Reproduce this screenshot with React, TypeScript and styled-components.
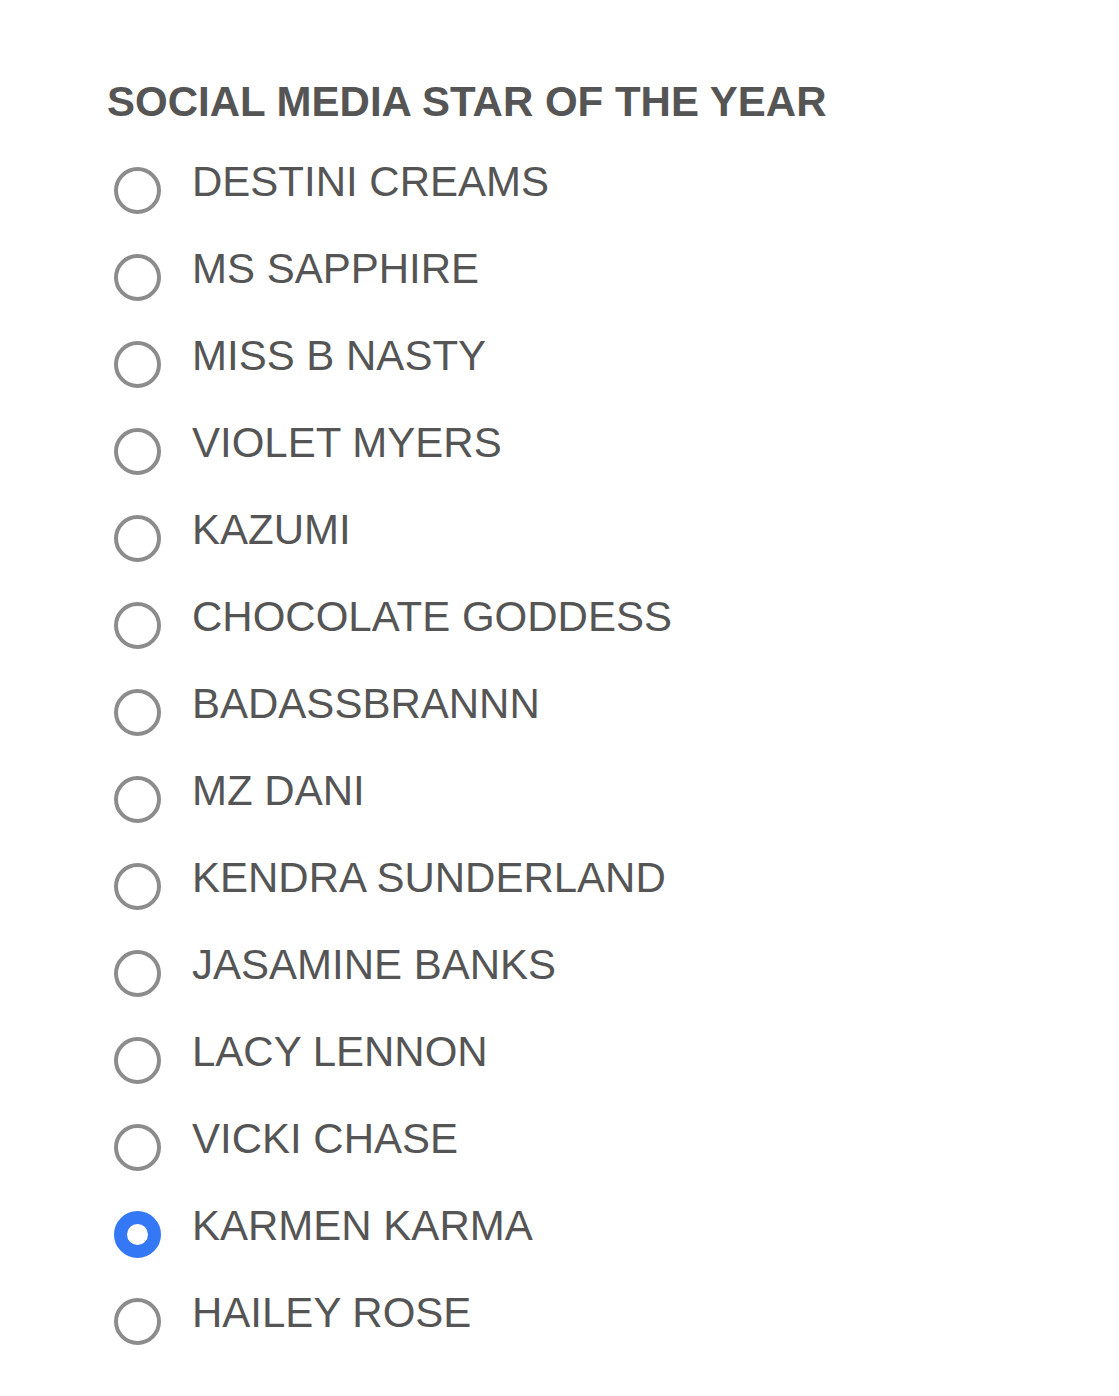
import { useState } from "react";
import styled, { createGlobalStyle } from "styled-components";

const nominees = [
    "DESTINI CREAMS",
    "MS SAPPHIRE",
    "MISS B NASTY",
    "VIOLET MYERS",
    "KAZUMI",
    "CHOCOLATE GODDESS",
    "BADASSBRANNN",
    "MZ DANI",
    "KENDRA SUNDERLAND",
    "JASAMINE BANKS",
    "LACY LENNON",
    "VICKI CHASE",
    "KARMEN KARMA",
    "HAILEY ROSE",
];

export default function App() {
    const [picked, setPicked] = useState("KARMEN KARMA");

    return (
        <>
            <GlobalStyle />
            <Page>
                <Title>SOCIAL MEDIA STAR OF THE YEAR</Title>
                <OptionList>
                    {nominees.map(name => (
                        <Option key={name}>
                            <Radio
                                type="radio"
                                name="social-media-star"
                                value={name}
                                checked={picked === name}
                                onChange={() => setPicked(name)}
                            />
                            <OptionText>{name}</OptionText>
                        </Option>
                    ))}
                </OptionList>
            </Page>
        </>
    )
}

const GlobalStyle = createGlobalStyle`
body {
    margin: 0;
    background: #fff;
    font-family: "Liberation Sans", Arial, sans-serif;
}
`

const Page = styled.main`
display: flex;
flex-direction: column;
padding: 81px 0 20px 107px;
`
const Title = styled.h3`
margin: 0 0 38px;
font-size: 42px;
line-height: 42px;
font-weight: 700;
color: #555;
`
const OptionList = styled.div`
display: flex;
flex-direction: column;
gap: 34px;
margin-left: 7px;
`
const Option = styled.label`
display: flex;
align-items: flex-start;
gap: 31px;
cursor: pointer;
`
const Radio = styled.input`
appearance: none;
flex: none;
box-sizing: border-box;
width: 47px;
height: 47px;
margin: 6px 0 0;
border-radius: 50%;
border: 4px solid #8c8c8c;
background: #fff;
cursor: pointer;

&:checked {
    border: 13px solid #3478f6;
}
`
const OptionText = styled.span`
font-size: 42px;
line-height: 42px;
color: #555;
`
